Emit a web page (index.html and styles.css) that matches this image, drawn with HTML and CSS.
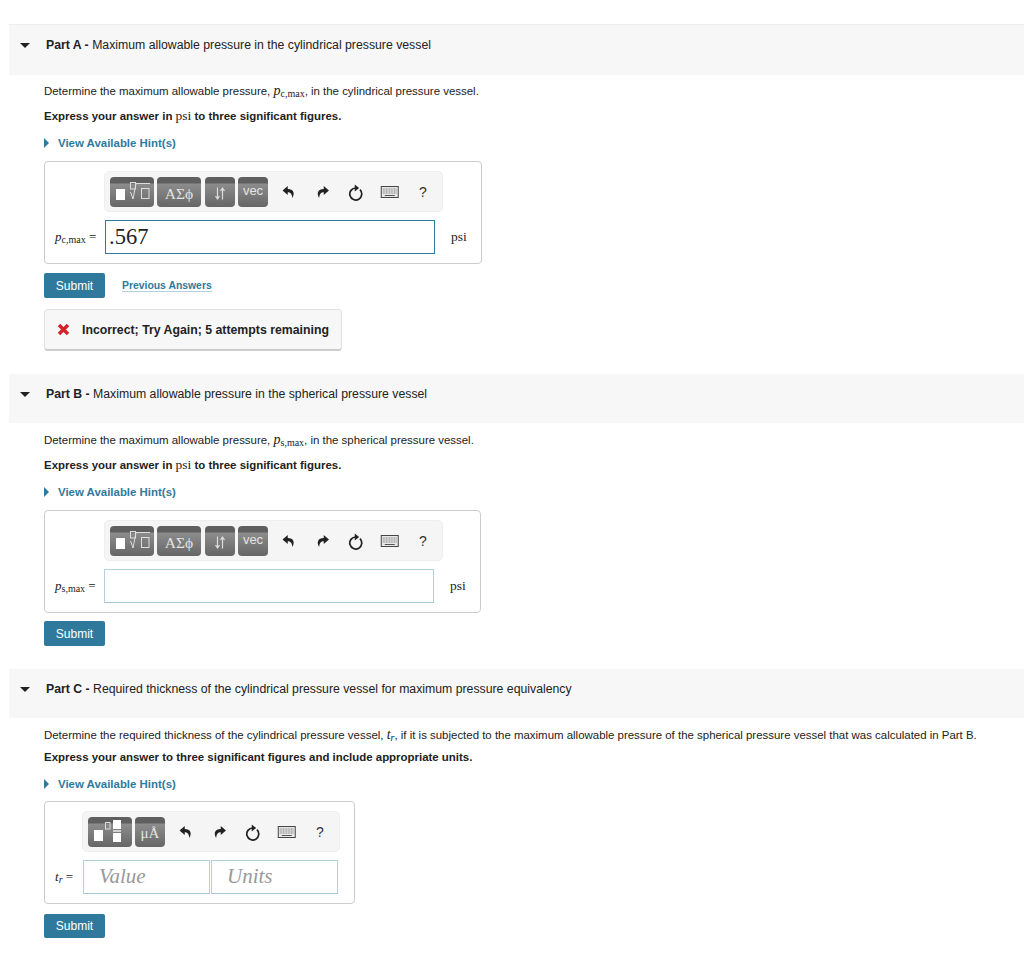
FILE: index.html
```html
<!DOCTYPE html>
<html lang="en">
<head>
    <meta charset="UTF-8">
    <title>Pressure vessel parts</title>
    <link rel="stylesheet" href="styles.css">
</head>
<body>
    <!-- Shared toolbar icons -->
    <svg class="sprite" width="0" height="0">
        <symbol id="undo" viewBox="0 0 14 14">
            <path d="M6 1 .8 5.600 6 10V7.200C8.600 7.200 10.200 8.600 10.600 13 13.400 8 11.800 4 6 4Z"/>
        </symbol>
        <symbol id="redo" viewBox="0 0 14 14">
            <path d="M8 1 13.200 5.600 8 10V7.200C5.400 7.200 3.800 8.600 3.400 13 .6 8 2.200 4 8 4Z"/>
        </symbol>
        <symbol id="reset" viewBox="0 0 16 18">
            <path d="M8 5A6 6 0 1 0 12.200 6.700" fill="none" stroke="#222" stroke-width="1.700"/>
            <path d="M7 1.600V8.400L11.400 5Z" fill="#222"/>
        </symbol>
        <symbol id="keyboard" viewBox="0 0 18 12">
            <rect x=".5" y=".5" width="17" height="11" fill="#e8e8e8" stroke="#444"/>
            <path d="M2 3h14M2 5h14M2 7h14" stroke="#777" stroke-dasharray="1 .6"/>
            <path d="M4 9.500h10" stroke="#555" stroke-width="1.200"/>
        </symbol>
        <symbol id="templates" viewBox="0 0 44 30">
            <rect x="6" y="12" width="9" height="11" fill="#fff"/>
            <rect x="20.500" y="5.500" width="5" height="6.500" fill="none" stroke="#ddd"/>
            <path d="M20 15.500h.8L23 22l3-15.500h14" fill="none" stroke="#ddd"/>
            <rect x="31.500" y="11.500" width="7.500" height="10" fill="none" stroke="#ddd"/>
        </symbol>
        <symbol id="arrows" viewBox="0 0 12 14">
            <path d="M3.500 1v11M1.500 9.500l2 3 2-3M8.500 13V2M6.500 4.500l2-3 2 3" fill="none" stroke="#ddd" stroke-width="1.200"/>
        </symbol>
        <symbol id="fraction" viewBox="0 0 44 30">
            <rect x="6" y="13" width="9" height="11" fill="#fff"/>
            <rect x="17.500" y="5.500" width="4.500" height="6.500" fill="none" stroke="#ddd"/>
            <rect x="25" y="3" width="8" height="9" fill="#fff"/>
            <path d="M25 14h8" stroke="#fff" stroke-width="1.300"/>
            <rect x="25" y="16" width="8" height="9" fill="#fff"/>
        </symbol>
    </svg>

    <!-- Part A -->
    <section class="part part-a">
        <div class="part-header part-header-first">
            <span class="caret-down"></span>
            <h2><b>Part A -</b> Maximum allowable pressure in the cylindrical pressure vessel</h2>
        </div>
        <div class="part-body">
            <p class="prompt">Determine the maximum allowable pressure, <span class="math"><i>p</i><sub>c,max</sub></span>, in the cylindrical pressure vessel.</p>
            <p class="instruction">Express your answer in <span class="math-plain">psi</span> to three significant figures.</p>
            <a class="hints"><span class="caret-right"></span>View Available Hint(s)</a>
            <div class="answer-box">
                <div class="toolbar">
                    <span class="tool tool-wide tool-icon"><svg width="44" height="30"><use href="#templates"/></svg></span>
                    <span class="tool tool-wide tool-greek">ΑΣϕ</span>
                    <span class="tool tool-small tool-arrows"><svg width="12" height="15"><use href="#arrows"/></svg></span>
                    <span class="tool tool-small tool-vec">vec</span>
                    <span class="actions">
                        <svg class="action" height="14"><use href="#undo"/></svg>
                        <svg class="action" height="14"><use href="#redo"/></svg>
                        <svg class="action" height="18"><use href="#reset"/></svg>
                        <svg class="action" height="12"><use href="#keyboard"/></svg>
                        <span class="help">?</span>
                    </span>
                </div>
                <div class="answer-row">
                    <span class="answer-label"><i>p</i><sub>c,max</sub> =</span>
                    <div class="answer-input answer-active">.567</div>
                    <span class="answer-unit">psi</span>
                </div>
            </div>
            <div class="submit-row">
                <button class="submit">Submit</button>
                <a class="previous">Previous Answers</a>
            </div>
            <div class="feedback">
                <svg width="13" height="13" viewBox="0 0 13 13"><path d="M2 2 11 11M11 2 2 11" stroke="#d2232a" stroke-width="3.400"/></svg>
                <span>Incorrect; Try Again; 5 attempts remaining</span>
            </div>
        </div>
    </section>

    <!-- Part B -->
    <section class="part part-b">
        <div class="part-header">
            <span class="caret-down"></span>
            <h2><b>Part B -</b> Maximum allowable pressure in the spherical pressure vessel</h2>
        </div>
        <div class="part-body">
            <p class="prompt">Determine the maximum allowable pressure, <span class="math"><i>p</i><sub>s,max</sub></span>, in the spherical pressure vessel.</p>
            <p class="instruction">Express your answer in <span class="math-plain">psi</span> to three significant figures.</p>
            <a class="hints"><span class="caret-right"></span>View Available Hint(s)</a>
            <div class="answer-box">
                <div class="toolbar">
                    <span class="tool tool-wide tool-icon"><svg width="44" height="30"><use href="#templates"/></svg></span>
                    <span class="tool tool-wide tool-greek">ΑΣϕ</span>
                    <span class="tool tool-small tool-arrows"><svg width="12" height="15"><use href="#arrows"/></svg></span>
                    <span class="tool tool-small tool-vec">vec</span>
                    <span class="actions">
                        <svg class="action" height="14"><use href="#undo"/></svg>
                        <svg class="action" height="14"><use href="#redo"/></svg>
                        <svg class="action" height="18"><use href="#reset"/></svg>
                        <svg class="action" height="12"><use href="#keyboard"/></svg>
                        <span class="help">?</span>
                    </span>
                </div>
                <div class="answer-row">
                    <span class="answer-label"><i>p</i><sub>s,max</sub> =</span>
                    <div class="answer-input"></div>
                    <span class="answer-unit">psi</span>
                </div>
            </div>
            <div class="submit-row">
                <button class="submit">Submit</button>
            </div>
        </div>
    </section>

    <!-- Part C -->
    <section class="part part-c">
        <div class="part-header">
            <span class="caret-down"></span>
            <h2><b>Part C -</b> Required thickness of the cylindrical pressure vessel for maximum pressure equivalency</h2>
        </div>
        <div class="part-body">
            <p class="prompt">Determine the required thickness of the cylindrical pressure vessel, <span class="math"><i>t</i><sub><i>r</i></sub></span>, if it is subjected to the maximum allowable pressure of the spherical pressure vessel that was calculated in Part B.</p>
            <p class="instruction">Express your answer to three significant figures and include appropriate units.</p>
            <a class="hints"><span class="caret-right"></span>View Available Hint(s)</a>
            <div class="answer-box answer-box-units">
                <div class="toolbar">
                    <span class="tool tool-wide tool-icon"><svg width="44" height="30"><use href="#fraction"/></svg></span>
                    <span class="tool tool-small tool-units">μÅ</span>
                    <span class="actions">
                        <svg class="action" height="14"><use href="#undo"/></svg>
                        <svg class="action" height="14"><use href="#redo"/></svg>
                        <svg class="action" height="18"><use href="#reset"/></svg>
                        <svg class="action" height="12"><use href="#keyboard"/></svg>
                        <span class="help">?</span>
                    </span>
                </div>
                <div class="answer-row">
                    <span class="answer-label"><i>t</i><sub><i>r</i></sub> =</span>
                    <div class="answer-input answer-placeholder">Value</div>
                    <div class="answer-input answer-placeholder">Units</div>
                </div>
            </div>
            <div class="submit-row">
                <button class="submit">Submit</button>
            </div>
        </div>
    </section>
</body>
</html>
```
FILE: styles.css
```css
/* Reset and Basic Styles */
* {
    box-sizing: border-box;
    margin: 0;
    padding: 0;
}

body {
    background-color: #fff;
    color: #222;
    font-family: "Liberation Sans", Arial, sans-serif;
    font-size: 11.44px;
    padding-top: 24px;
}

.sprite {
    display: block;
    height: 0;
}

/* Part Headers */
.part-header {
    display: flex;
    align-items: flex-start;
    height: 49px;
    margin-left: 9px;
    padding: 12px 0 0 11px;
    background-color: #f7f7f7;
}

.part-header-first {
    height: 51px;
    border-top: 1px solid #eee;
}

.part-header h2 {
    font-size: 12.28px;
    font-weight: normal;
    line-height: 16px;
}

.caret-down {
    width: 0;
    height: 0;
    margin: 6px 16px 0 0;
    border-left: 5px solid transparent;
    border-right: 5px solid transparent;
    border-top: 5px solid #222;
}

.part-b {
    margin-top: 23px;
}

.part-c {
    margin-top: 23px;
}

/* Question Text */
.part-body {
    padding: 9px 0 0 44px;
}

.part-a .part-body {
    padding-top: 8px;
}

.prompt {
    line-height: 16px;
    height: 16px;
}

.math, .answer-label {
    font-family: "Liberation Serif", serif;
}

.math {
    font-size: 14px;
}

.math sub, .answer-label sub {
    font-size: 10px;
    line-height: 0;
    vertical-align: -2px;
}

.instruction {
    margin-top: 9px;
    font-weight: bold;
    line-height: 16px;
}

.part-c .instruction {
    margin-top: 6px;
}

.math-plain {
    font-family: "Liberation Serif", serif;
    font-size: 13.5px;
    font-weight: normal;
}

.hints {
    display: flex;
    align-items: center;
    margin-top: 11px;
    color: #2f7a9c;
    font-weight: bold;
    line-height: 16px;
}

.caret-right {
    width: 0;
    height: 0;
    margin-right: 9px;
    border-top: 5px solid transparent;
    border-bottom: 5px solid transparent;
    border-left: 5px solid #2f7a9c;
}

/* Answer Box */
.answer-box {
    width: 438px;
    margin-top: 10px;
    padding: 9px 10px 9px 59px;
    border: 1px solid #ccc;
    border-radius: 4px;
}

.part-b .answer-box {
    width: 437px;
}

.answer-box-units {
    width: 311px;
    padding-left: 38px;
    margin-top: 9px;
}

.toolbar {
    display: flex;
    align-items: center;
    gap: 3px;
    width: 339px;
    height: 41px;
    padding-left: 5px;
    background-color: #f5f5f5;
    border: 1px solid #eee;
    border-radius: 5px;
}

.answer-box-units .toolbar {
    width: 258px;
    margin-left: -1px;
}

.tool {
    display: flex;
    align-items: center;
    justify-content: center;
    height: 30px;
    padding-top: 4px;
    color: #e4e4e4;
    background: linear-gradient(#5f5f5f 0, #5f5f5f 6px, #8c8c8c 7px, #666 100%);
    border-radius: 4px;
}

.tool-wide {
    width: 44px;
}

.tool-small {
    width: 30px;
}

.tool-icon {
    padding-top: 0;
}

.tool-arrows {
    margin-left: 1px;
}

.tool-greek {
    font-family: "Liberation Serif", "DejaVu Serif", serif;
    font-size: 15.5px;
}

.tool-vec {
    font-size: 13px;
    padding-top: 0;
    padding-bottom: 2px;
}

.tool-units {
    font-family: "Liberation Serif", serif;
    font-size: 15px;
}

.actions {
    display: flex;
    align-items: center;
    padding-left: 1.25px;
}

.action {
    width: 33.5px;
    fill: #222;
}

.help {
    width: 33.5px;
    font-size: 14px;
    color: #333;
    text-align: center;
}

.answer-row {
    display: flex;
    align-items: center;
    margin-top: 8px;
    margin-left: -49px;
}

.answer-label {
    width: 50px;
    font-size: 13px;
    white-space: nowrap;
}

.part-b .answer-label {
    width: 49px;
}

.answer-input {
    width: 330px;
    height: 34px;
    padding-left: 3px;
    font-family: "Liberation Serif", serif;
    font-size: 22.5px;
    line-height: 31px;
    border: 1px solid #b4d0dc;
    border-bottom-color: #a5c6d4;
}

.answer-active {
    border-color: #2f7a9c;
}

.answer-unit {
    margin-left: 16px;
    font-family: "Liberation Serif", serif;
    font-size: 13.5px;
}

.answer-box-units .answer-row {
    margin-left: -28px;
}

.answer-box-units .answer-label {
    width: 28px;
}

.answer-box-units .answer-input {
    width: 127px;
    margin-right: 1px;
    padding-left: 15px;
    color: #999;
    font-style: italic;
    font-size: 21px;
}

/* Submit Row */
.submit-row {
    display: flex;
    align-items: center;
    margin-top: 9px;
}

.part-b .submit-row {
    margin-top: 8px;
}

.part-c .submit-row {
    margin-top: 10px;
}

.submit {
    width: 61px;
    height: 25px;
    color: #fff;
    font-family: inherit;
    font-size: 12px;
    background-color: #2f7a9c;
    border: none;
    border-radius: 2px;
}

.part-c .submit {
    height: 24px;
}

.previous {
    margin-left: 17px;
    color: #2f7a9c;
    font-size: 10.4px;
    font-weight: bold;
    border-bottom: 1px solid #b4d0dc;
}

/* Feedback */
.feedback {
    display: flex;
    align-items: center;
    gap: 12px;
    width: 298px;
    height: 42px;
    margin-top: 11px;
    padding-left: 12px;
    font-size: 12.3px;
    font-weight: bold;
    background-color: #f7f7f7;
    border: 1px solid #e2e2e2;
    border-bottom: 2px solid #ccc;
    border-radius: 4px;
}
```
